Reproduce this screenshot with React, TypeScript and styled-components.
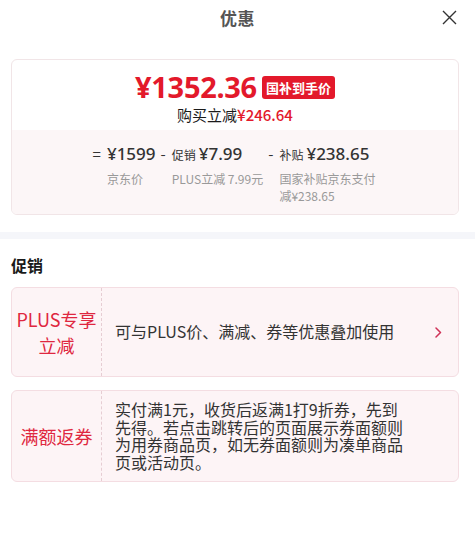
import React, { FC } from 'react';
import styled, { createGlobalStyle } from 'styled-components';

const GlobalStyle = createGlobalStyle`
  body {
    margin: 0;
    background: #fff;
    font-family: "Noto Sans CJK SC", "Noto Sans", sans-serif;
    color: #333;
  }
`;

const red = '#e3192b';
const tagRed = '#df2740';

interface Term {
  op: string;
  label?: string;
  amount: string;
  note: string;
  narrow?: boolean;
}

interface Promo {
  tag: string;
  text: string;
  arrow?: boolean;
}

const terms: Term[] = [
  { op: '=', amount: '¥1599', note: '京东价' },
  { op: '-', label: '促销', amount: '¥7.99', note: 'PLUS立减 7.99元' },
  { op: '-', label: '补贴', amount: '¥238.65', note: '国家补贴京东支付减¥238.65', narrow: true },
];

const promos: Promo[] = [
  { tag: 'PLUS专享\n立减', text: '可与PLUS价、满减、券等优惠叠加使用', arrow: true },
  {
    tag: '满额返券',
    text: '实付满1元，收货后返满1打9折券，先到先得。若点击跳转后的页面展示券面额则为用券商品页，如无券面额则为凑单商品页或活动页。',
  },
];

const Page = styled.div`
  width: 475px;
  min-height: 544px;
  background: #fff;
`;

const Header = styled.div`
  display: grid;
  grid-template-columns: 1fr auto 1fr;
  align-items: center;
  height: 34px;
  padding-right: 18px;
  padding-left: 18px;
`;

const Title = styled.div`
  grid-column: 2;
  font-size: 17px;
  font-weight: 700;
  color: #555;
  letter-spacing: 0.5px;
`;

const CloseButton = styled.button`
  justify-self: end;
  display: flex;
  padding: 0;
  border: 0;
  background: none;
  color: #333;
`;

const Body = styled.div`
  padding: 25px 16px 0 11px;
`;

const PriceCard = styled.div`
  border: 1px solid #f1e5e7;
  border-radius: 6px;
  overflow: hidden;
`;

const PriceTop = styled.div`
  padding: 9px 0 5px;
  text-align: center;
`;

const FinalRow = styled.div`
  display: flex;
  justify-content: center;
  align-items: center;
  gap: 5px;
  height: 36px;
`;

const FinalPrice = styled.span`
  font-family: "Noto Sans", sans-serif;
  font-size: 29px;
  line-height: 34px;
  font-weight: 700;
  color: ${red};
  letter-spacing: -0.3px;
`;

const Badge = styled.span`
  display: inline-flex;
  align-items: center;
  height: 23px;
  padding: 0 4px;
  border-radius: 3px;
  background: ${red};
  color: #fff;
  font-size: 13px;
  font-weight: 700;
  margin-top: 1px;
`;

const Saving = styled.div`
  font-size: 15px;
  line-height: 20px;
  color: #1a1a1a;
  span {
    color: ${red};
    font-weight: 500;
  }
`;

const Breakdown = styled.div`
  display: flex;
  justify-content: center;
  align-items: flex-start;
  gap: 5px;
  padding: 12px 0 10px;
  background: #fcf6f7;
`;

const TermBox = styled.div`
  display: grid;
  grid-template-columns: auto auto;
  column-gap: 6px;
`;

const Op = styled.span`
  font-size: 15px;
  line-height: 24px;
  color: #333;
`;

const TermMain = styled.div`
  display: flex;
  align-items: center;
  gap: 3px;
  height: 24px;
  white-space: nowrap;
`;

const TermLabel = styled.span`
  font-size: 12px;
  color: #333;
`;

const TermAmount = styled.span`
  font-family: "Noto Sans", sans-serif;
  font-size: 17px;
  line-height: 24px;
  font-weight: 500;
  color: #333;
`;

const TermNote = styled.div<{ $narrow?: boolean }>`
  grid-column: 2;
  margin-top: 4px;
  max-width: ${(p) => (p.$narrow ? '98px' : 'none')};
  font-size: 12px;
  line-height: 17px;
  color: #999;
  white-space: ${(p) => (p.$narrow ? 'normal' : 'nowrap')};
`;

const Band = styled.div`
  height: 7px;
  margin-top: 17px;
  background: #f5f6fa;
`;

const PromoSection = styled.div`
  display: flex;
  flex-direction: column;
  gap: 13px;
  padding: 0 16px 0 11px;
`;

const SectionTitle = styled.h3`
  margin: 15px 0 -2px;
  font-size: 16px;
  line-height: 22px;
  font-weight: 700;
  color: #1a1a1a;
`;

const PromoCard = styled.div`
  display: flex;
  min-height: 88px;
  border: 1px solid #f4dde2;
  border-radius: 6px;
  background: #fdf4f6;
`;

const PromoTag = styled.div`
  flex: 0 0 89px;
  display: flex;
  align-items: center;
  justify-content: center;
  border-right: 1px dashed #e6cdd3;
  font-size: 18px;
  line-height: 26px;
  color: ${tagRed};
  text-align: center;
  white-space: pre-line;
`;

const PromoBody = styled.div`
  flex: 1;
  display: flex;
  align-items: center;
  padding: 10px 16px 10px 13px;
`;

const PromoText = styled.div`
  flex: 1;
  font-size: 16px;
  line-height: 17.5px;
  color: #333;
`;

const ArrowSlot = styled.div`
  flex: 0 0 32px;
  display: flex;
  justify-content: flex-end;
  color: #cf3157;
`;

const Chevron: FC = () => (
  <svg width="7" height="11" viewBox="0 0 7 11" fill="none">
    <path d="M1 1l4.5 4.5L1 10" stroke="currentColor" strokeWidth="1.5" strokeLinecap="round" strokeLinejoin="round" />
  </svg>
);

const App: FC = () => (
  <Page>
    <GlobalStyle />
    <Header>
      <Title>优惠</Title>
      <CloseButton aria-label="关闭">
        <svg width="15" height="15" viewBox="0 0 15 15">
          <path d="M1 1l13 13M14 1L1 14" stroke="currentColor" strokeWidth="1.4" />
        </svg>
      </CloseButton>
    </Header>

    <Body>
      <PriceCard>
        <PriceTop>
          <FinalRow>
            <FinalPrice>¥1352.36</FinalPrice>
            <Badge>国补到手价</Badge>
          </FinalRow>
          <Saving>
            购买立减<span>¥246.64</span>
          </Saving>
        </PriceTop>
        <Breakdown>
          {terms.map((t) => (
            <TermBox key={t.note}>
              <Op>{t.op}</Op>
              <TermMain>
                {t.label && <TermLabel>{t.label}</TermLabel>}
                <TermAmount>{t.amount}</TermAmount>
              </TermMain>
              <TermNote $narrow={t.narrow}>{t.note}</TermNote>
            </TermBox>
          ))}
        </Breakdown>
      </PriceCard>
    </Body>

    <Band />

    <PromoSection>
      <SectionTitle>促销</SectionTitle>
      {promos.map((p) => (
        <PromoCard key={p.tag}>
          <PromoTag>{p.tag}</PromoTag>
          <PromoBody>
            <PromoText>{p.text}</PromoText>
            <ArrowSlot>{p.arrow && <Chevron />}</ArrowSlot>
          </PromoBody>
        </PromoCard>
      ))}
    </PromoSection>
  </Page>
);

export default App;
